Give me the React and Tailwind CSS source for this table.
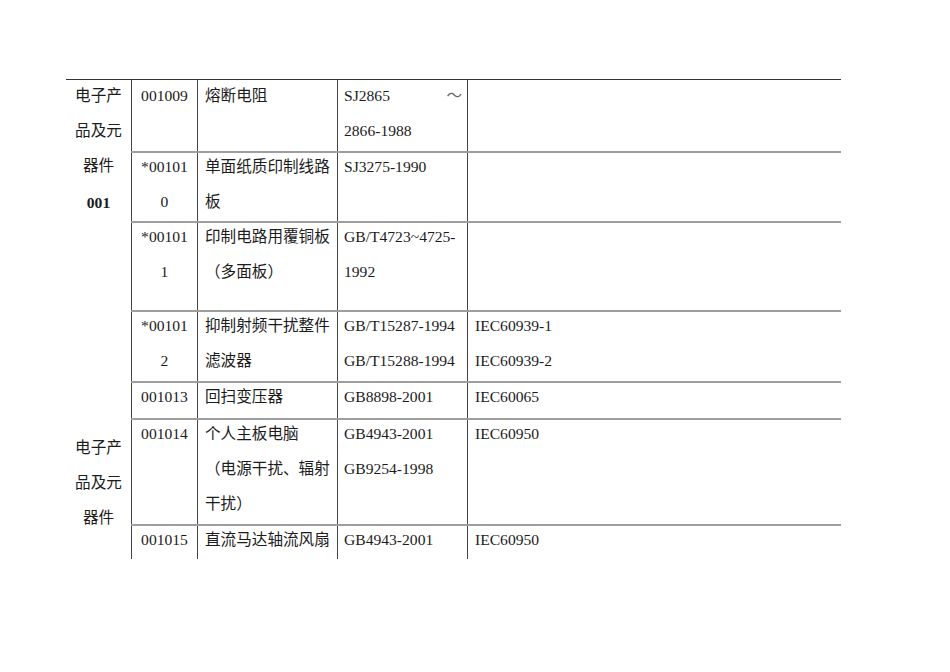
// Standards table page (document scan style)
const rows = [
  { h: 'h-[71px]', first: true, code: ['001009'], name: ['熔断电阻'], std: 'tilde', iec: [] },
  { h: 'h-[70px]', code: ['*00101', '0'], name: ['单面纸质印制线路', '板'], std: ['SJ3275-1990'], iec: [] },
  { h: 'h-[89px]', code: ['*00101', '1'], name: ['印制电路用覆铜板', '（多面板）'], std: ['GB/T4723~4725-', '1992'], iec: [] },
  { h: 'h-[71px]', code: ['*00101', '2'], name: ['抑制射频干扰整件', '滤波器'], std: ['GB/T15287-1994', 'GB/T15288-1994'], iec: ['IEC60939-1', 'IEC60939-2'] },
  { h: 'h-[37px]', code: ['001013'], name: ['回扫变压器'], std: ['GB8898-2001'], iec: ['IEC60065'] },
  { h: 'h-[106px]', code: ['001014'], name: ['个人主板电脑', '（电源干扰、辐射', '干扰）'], std: ['GB4943-2001', 'GB9254-1998'], iec: ['IEC60950'] },
  { h: 'h-[35px]', code: ['001015'], name: ['直流马达轴流风扇'], std: ['GB4943-2001'], iec: ['IEC60950'] },
]

const Lines = ({ items, shift = '-mt-[2px]' }) => (
  <div className={shift}>
    {items.map((t, i) => (
      <div key={i} className="h-[35px] leading-[35px] whitespace-nowrap">{t}</div>
    ))}
  </div>
)

export default function App() {
  return (
    <div
      className="w-[950px] h-[672px] bg-white overflow-hidden text-[#1c1c1c] text-[15.6px]"
      style={{ fontFamily: '"Liberation Serif", "Noto Sans CJK SC", serif' }}
    >
      <div className="ml-[66px] mt-[79px] w-[775px] border-t border-[#333]">
        <div className="flex">
          {/* Category column */}
          <div className="w-[65px] text-center">
            <Lines items={['电子产', '品及元', '器件']} />
            <div className="h-[35px] leading-[40px] font-bold">001</div>
            <div className="mt-[214px]">
              <Lines items={['电子产', '品及元', '器件']} />
            </div>
          </div>

          {/* Data rows */}
          <div className="w-[710px]">
            {rows.map((r, i) => {
              const shift = r.first ? '-mt-[2px]' : '-mt-[4px]'
              return (
                <div
                  key={i}
                  className={`grid grid-cols-[66px_140px_130px_374px] ${r.h} ${r.first ? '' : 'border-t-2 border-[#9e9e9e]'}`}
                >
                  <div className="border-l border-[#444] text-center overflow-hidden">
                    <Lines items={r.code} shift={shift} />
                  </div>
                  <div className="border-l border-[#444] pl-[7px] overflow-hidden">
                    <Lines items={r.name} shift={shift} />
                  </div>
                  <div className="border-l border-[#444] pl-[6px] pr-[5px] overflow-hidden">
                    {r.std === 'tilde' ? (
                      <div className={shift}>
                        <div className="h-[35px] leading-[35px] flex justify-between">
                          <span>SJ2865</span>
                          <span className="text-[#666]">～</span>
                        </div>
                        <div className="h-[35px] leading-[35px]">2866-1988</div>
                      </div>
                    ) : (
                      <Lines items={r.std} shift={shift} />
                    )}
                  </div>
                  <div className="border-l border-[#444] pl-[7px] overflow-hidden">
                    <Lines items={r.iec} shift={shift} />
                  </div>
                </div>
              )
            })}
          </div>
        </div>
      </div>
    </div>
  )
}
